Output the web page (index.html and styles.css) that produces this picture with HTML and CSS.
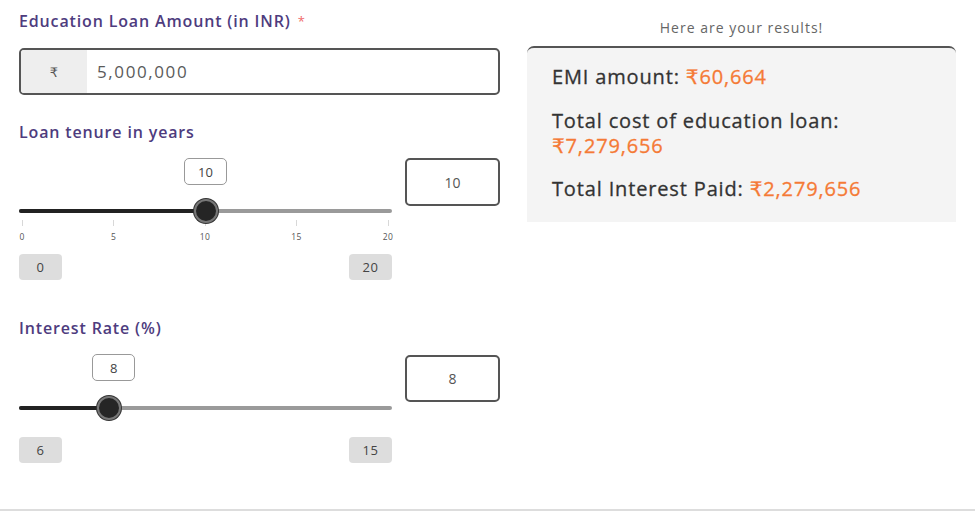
FILE: index.html
```html
<!DOCTYPE html>
<html>
<head>
<meta charset="utf-8">
<link rel="stylesheet" href="styles.css">
</head>
<body>
<div class="page">
  <div class="form">
    <div class="label first">Education Loan Amount (in INR) <span class="req">*</span></div>
    <div class="amount">
      <div class="prefix">₹</div>
      <div class="amount-value">5,000,000</div>
    </div>

    <div class="label sec">Loan tenure in years</div>
    <div class="slider-row">
      <div class="slider-col">
        <div class="bubble-row"><div class="bubble" style="left: calc(0.5 * (100% - 43px))">10</div></div>
        <div class="track-wrap">
          <div class="track"><div class="fill" style="width: calc(12px + 0.5 * (100% - 24px))"></div></div>
          <div class="thumb" style="left: calc(12px + 0.5 * (100% - 24px))"></div>
        </div>
        <div class="ticks">
          <div class="tick"><span class="tline"></span><span class="tlabel">0</span></div>
          <div class="tick"><span class="tline"></span><span class="tlabel">5</span></div>
          <div class="tick"><span class="tline"></span><span class="tlabel">10</span></div>
          <div class="tick"><span class="tline"></span><span class="tlabel">15</span></div>
          <div class="tick"><span class="tline"></span><span class="tlabel">20</span></div>
        </div>
        <div class="minmax with-ticks"><span class="mm">0</span><span class="mm">20</span></div>
      </div>
      <div class="valbox">10</div>
    </div>

    <div class="label sec3">Interest Rate (%)</div>
    <div class="slider-row">
      <div class="slider-col">
        <div class="bubble-row"><div class="bubble" style="left: calc(0.2222 * (100% - 43px))">8</div></div>
        <div class="track-wrap plain">
          <div class="track"><div class="fill" style="width: calc(12px + 0.2222 * (100% - 24px))"></div></div>
          <div class="thumb" style="left: calc(12px + 0.2222 * (100% - 24px))"></div>
        </div>
        <div class="minmax plain"><span class="mm">6</span><span class="mm">15</span></div>
      </div>
      <div class="valbox v2">8</div>
    </div>
  </div>

  <div class="results">
    <div class="results-title">Here are your results!</div>
    <div class="panel">
      <div class="res r1">EMI amount: <span class="amt">₹60,664</span></div>
      <div class="res r2">Total cost of education loan:<br><span class="amt">₹7,279,656</span></div>
      <div class="res r3">Total Interest Paid: <span class="amt">₹2,279,656</span></div>
    </div>
  </div>
</div>
<div class="bottom-line"></div>
</body>
</html>
```

FILE: styles.css
```css
html, body {
  margin: 0;
  padding: 0;
  background: #ffffff;
}
body {
  font-family: "Open Sans", "DejaVu Sans", sans-serif;
  width: 975px;
  height: 511px;
  position: relative;
  overflow: hidden;
}
.page {
  display: flex;
  align-items: flex-start;
  padding-left: 19px;
}
.form {
  width: 481px;
  display: flex;
  flex-direction: column;
}
.label {
  color: #4e3c7e;
  font-size: 16px;
  line-height: 20px;
  height: 20px;
  font-weight: 600;
  letter-spacing: 0.85px;
  white-space: nowrap;
}
.label.first { margin-top: 11px; }
.label.sec { margin-top: 27px; }
.label.sec3 { margin-top: 38px; }
.req { color: #f06a6a; font-size: 13px; vertical-align: top; letter-spacing: 0; font-weight: 400; margin-left: 2px; }

.amount {
  margin-top: 17px;
  height: 47px;
  box-sizing: border-box;
  border: 2px solid #555;
  border-radius: 5px;
  display: flex;
  overflow: hidden;
}
.prefix {
  width: 66px;
  background: #eeeeee;
  display: flex;
  align-items: center;
  justify-content: center;
  color: #555;
  font-size: 13px;
}
.amount-value {
  display: flex;
  align-items: center;
  padding-left: 10px;
  color: #5a5a5a;
  font-size: 17px;
  letter-spacing: 1.6px;
}

.slider-row {
  margin-top: 16px;
  display: flex;
  align-items: flex-start;
}
.slider-col {
  width: 373px;
  display: flex;
  flex-direction: column;
}
.bubble-row {
  height: 27px;
  position: relative;
}
.bubble {
  position: absolute;
  top: 0;
  width: 43px;
  height: 27px;
  box-sizing: border-box;
  border: 1px solid #999;
  border-radius: 5px;
  display: flex;
  align-items: center;
  justify-content: center;
  font-size: 13px;
  color: #444;
  background: #fff;
}
.track-wrap {
  margin-top: 17px;
  height: 18px;
  position: relative;
  display: flex;
  align-items: center;
}
.track-wrap.plain { margin-top: 18px; }
.track {
  width: 100%;
  height: 4px;
  background: #9a9a9a;
  border-radius: 2px;
  position: relative;
}
.fill {
  height: 4px;
  background: #222;
  border-radius: 2px;
}
.thumb {
  position: absolute;
  top: 50%;
  width: 24px;
  height: 24px;
  box-sizing: border-box;
  border-radius: 50%;
  background: #252525;
  border: 2px solid #777;
  box-shadow: 0 0 0 1px #333;
  transform: translate(-50%, -50%);
}
.ticks {
  display: flex;
  justify-content: space-between;
  padding: 0 4px 0 3px;
  height: 22px;
}
.tick {
  width: 0;
  display: flex;
  flex-direction: column;
  align-items: center;
}
.tline {
  width: 1px;
  height: 6px;
  background: #d8d8d8;
  flex: none;
}
.tlabel {
  margin-top: 6px;
  font-size: 8.5px;
  line-height: 10px;
  color: #555;
  letter-spacing: 0.4px;
}
.minmax {
  display: flex;
  justify-content: space-between;
}
.minmax.with-ticks { margin-top: 12px; }
.minmax.plain { margin-top: 20px; }
.mm {
  width: 43px;
  height: 26px;
  background: #dddddd;
  border-radius: 4px;
  display: flex;
  align-items: center;
  justify-content: center;
  font-size: 13px;
  color: #444;
  letter-spacing: 0.5px;
}
.valbox {
  margin-left: 13px;
  width: 95px;
  height: 48px;
  box-sizing: border-box;
  border: 2px solid #555;
  border-radius: 5px;
  display: flex;
  align-items: center;
  justify-content: center;
  font-size: 14px;
  color: #555;
}
.valbox.v2 { margin-top: 1px; height: 47px; }

.results {
  margin-left: 27px;
  width: 429px;
  display: flex;
  flex-direction: column;
}
.results-title {
  margin-top: 19px;
  height: 18px;
  line-height: 18px;
  font-size: 14px;
  color: #666;
  text-align: center;
  letter-spacing: 1px;
}
.panel {
  margin-top: 9px;
  height: 176px;
  box-sizing: border-box;
  background: #f4f4f4;
  border-top: 2px solid #555;
  border-radius: 7px 7px 0 0;
  padding: 16px 0 0 25px;
}
.res {
  font-size: 20px;
  line-height: 25px;
  color: #333;
  font-weight: 500;
  letter-spacing: 0.85px;
  -webkit-text-stroke: 0.3px currentColor;
}
.r2 { margin-top: 19px; }
.r3 { margin-top: 18px; }
.amt { color: #f47a36; }
.bottom-line {
  position: absolute;
  left: 0;
  right: 0;
  top: 509px;
  height: 2px;
  background: #dddddd;
}
```
